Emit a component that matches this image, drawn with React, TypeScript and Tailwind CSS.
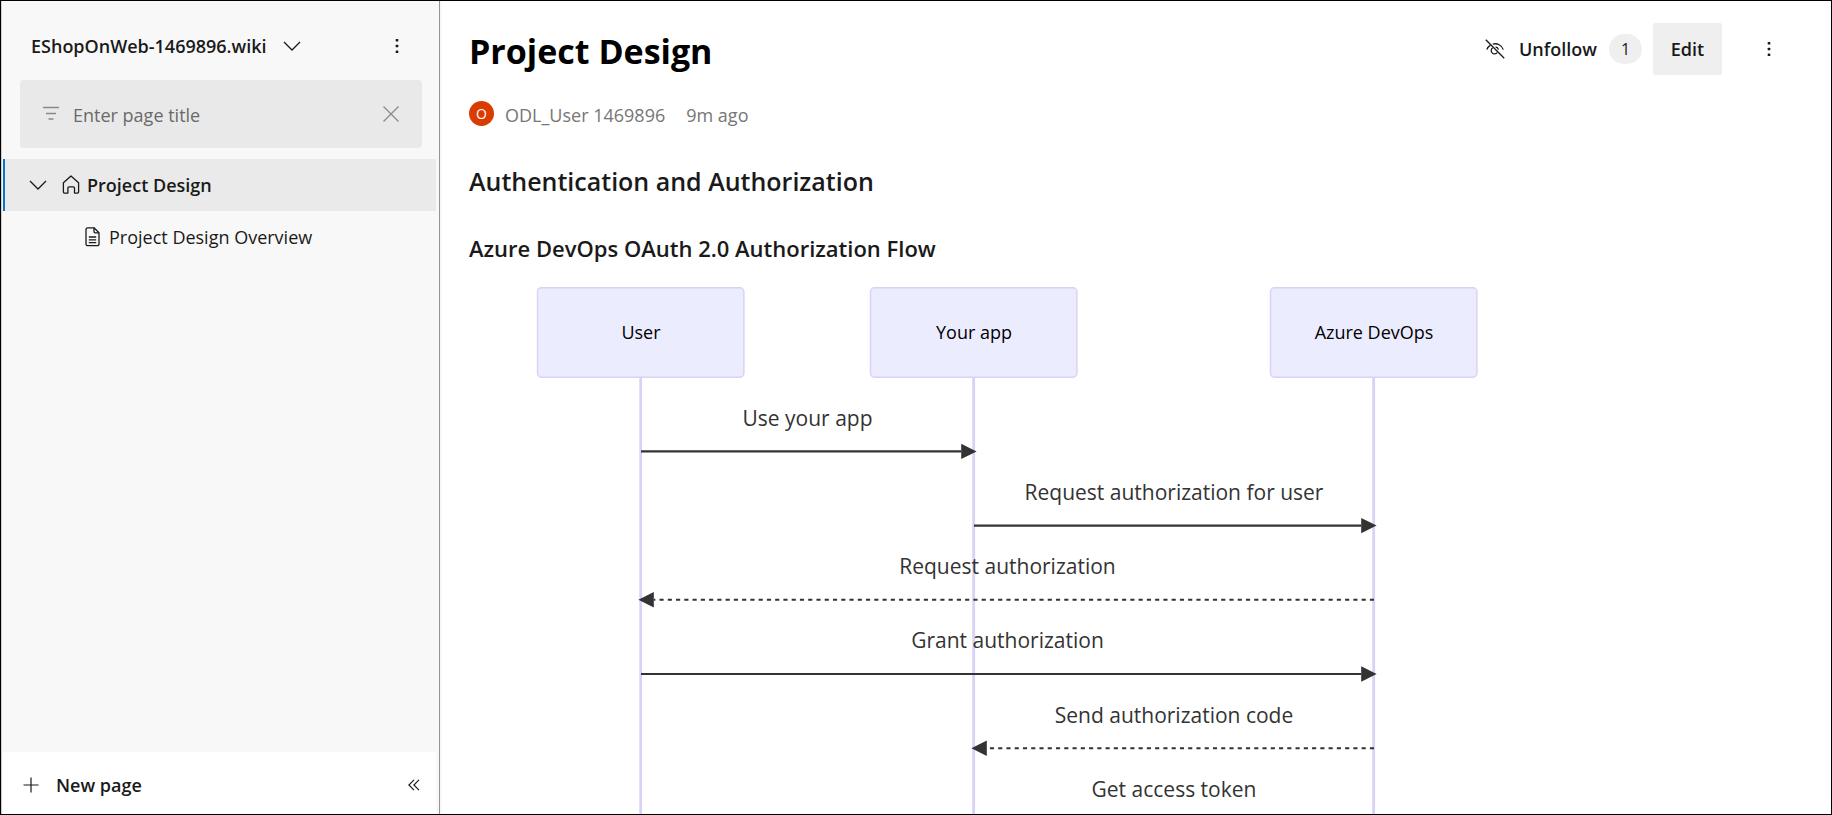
import React from "react";

const actors = [
  { name: "User", x: 172 },
  { name: "Your app", x: 505 },
  { name: "Azure DevOps", x: 905 },
];

const messages = [
  { text: "Use your app", from: 0, to: 1, dashed: false },
  { text: "Request authorization for user", from: 1, to: 2, dashed: false },
  { text: "Request authorization", from: 2, to: 0, dashed: true },
  { text: "Grant authorization", from: 0, to: 2, dashed: false },
  { text: "Send authorization code", from: 2, to: 1, dashed: true },
  { text: "Get access token", from: 1, to: 2, dashed: false },
];

const FIRST_LINE = 171.4;
const LINE_STEP = 74.2;

function ChevronDown() {
  return (
    <svg width="18" height="18" viewBox="0 0 18 18" fill="none" stroke="currentColor" strokeWidth="1.3" aria-hidden="true">
      <path d="M1 5l8 8 8-8" />
    </svg>
  );
}

function MoreDots() {
  return (
    <svg width="18" height="18" viewBox="0 0 18 18" fill="currentColor" aria-hidden="true">
      <rect x="7.7" y="2" width="2.6" height="2.6" rx="0.6" />
      <rect x="7.7" y="7.7" width="2.6" height="2.6" rx="0.6" />
      <rect x="7.7" y="13.4" width="2.6" height="2.6" rx="0.6" />
    </svg>
  );
}

function FilterIcon() {
  return (
    <svg width="18" height="18" viewBox="0 0 18 18" fill="none" stroke="currentColor" strokeWidth="1.5" aria-hidden="true">
      <path d="M1 2.5h16M4 8.5h10M6.5 14h5" />
    </svg>
  );
}

function CloseIcon() {
  return (
    <svg width="18" height="18" viewBox="0 0 18 18" fill="none" stroke="currentColor" strokeWidth="1.3" aria-hidden="true">
      <path d="M1.5 1.5l15 15M16.5 1.5l-15 15" />
    </svg>
  );
}

function HomeIcon() {
  return (
    <svg width="18" height="20" viewBox="0 0 18 20" fill="none" stroke="currentColor" strokeWidth="1.3" strokeLinejoin="round" aria-hidden="true">
      <path d="M9 0.9l7.6 6.9v9.3a1 1 0 0 1-1 1h-3.1v-5a1.2 1.2 0 0 0-1.2-1.2H7.1a1.2 1.2 0 0 0-1.2 1.2v5H2.4a1 1 0 0 1-1-1V7.8z" />
    </svg>
  );
}

function PageIcon() {
  return (
    <svg width="16" height="20" viewBox="0 0 16 20" fill="none" stroke="currentColor" strokeWidth="1.3" strokeLinejoin="round" aria-hidden="true">
      <path d="M9 0.8H2.8A1.8 1.8 0 0 0 1 2.6v14.3a1.8 1.8 0 0 0 1.8 1.8h9.4a1.8 1.8 0 0 0 1.8-1.8V5.8z" />
      <path d="M9 0.8v3.8a1.2 1.2 0 0 0 1.2 1.2H14M3.8 10h7.4M3.8 12.8h7.4M3.8 15.6h7.4" />
    </svg>
  );
}

function UnfollowIcon() {
  return (
    <svg width="20" height="20" viewBox="0 0 20 20" fill="none" stroke="currentColor" strokeWidth="1.3" aria-hidden="true">
      <path d="M0.8 0.8l18.4 18.4" />
      <path d="M1.8 10.6C2.6 8.6 3.9 7.1 5.5 6.1M7.8 5.1c4.5-1.2 9 1 10.5 5.5" />
      <path d="M7.7 8.7a3.4 3.4 0 1 0 4.6 4.9M10.6 7.9a3.4 3.4 0 0 1 2.8 2.8" />
    </svg>
  );
}

function PlusIcon() {
  return (
    <svg width="16" height="16" viewBox="0 0 16 16" fill="none" stroke="currentColor" strokeWidth="1.2" aria-hidden="true">
      <path d="M8 0.5v15M0.5 8h15" />
    </svg>
  );
}

function CollapseIcon() {
  return (
    <svg width="12" height="12" viewBox="0 0 12 12" fill="none" stroke="currentColor" strokeWidth="1.2" aria-hidden="true">
      <path d="M6 0.8L0.9 6 6 11.2M11 0.8L5.9 6l5.1 5.2" />
    </svg>
  );
}

function SequenceDiagram() {
  return (
    <svg width="1100" height="600" viewBox="0 0 1100 600" className="block shrink-0" role="img" aria-label="Authorization sequence diagram">
      {actors.map((a) => (
        <g key={a.name}>
          <line x1={a.x - 0.3} x2={a.x - 0.3} y1="98" y2="600" stroke="#dbd0f5" strokeWidth="2.8" />
          <rect x={a.x - 103.5} y="7.8" width="206.4" height="89.5" rx="4" fill="#ececff" stroke="#dbd0f5" strokeWidth="1.4" />
          <text x={a.x} y="59" textAnchor="middle" fontSize="18" fill="#000">
            {a.name}
          </text>
        </g>
      ))}
      {messages.map((m, i) => {
        const y = FIRST_LINE + i * LINE_STEP;
        const x1 = actors[m.from].x;
        const x2 = actors[m.to].x;
        const dir = x2 > x1 ? 1 : -1;
        const tip = x2 + dir * 2.6;
        const base = tip - dir * 15.4;
        return (
          <g key={m.text}>
            <text x={(x1 + x2) / 2} y={y - 25.6} textAnchor="middle" fontSize="21" fill="#333">
              {m.text}
            </text>
            <line x1={x1} x2={base} y1={y} y2={y} stroke="#333" strokeWidth="2.1" strokeDasharray={m.dashed ? "4.13 4.13" : undefined} />
            <path d={`M${tip} ${y}L${base} ${y - 7.7}V${y + 7.7}z`} fill="#333" />
          </g>
        );
      })}
    </svg>
  );
}

export default function App() {
  return (
    <div className="flex h-screen overflow-hidden border border-black bg-white font-['Open_Sans','Noto_Sans',sans-serif] text-lg leading-7 text-[#1a1a1a]">
      <aside className="flex w-[439px] shrink-0 flex-col border-x border-l-[#d0cece] border-r-[#949494] bg-[#f8f8f8]">
        <div className="flex h-[79px] shrink-0 items-center justify-between pt-2.5 pr-[33px] pl-7">
          <button type="button" className="flex items-center gap-4 pl-px font-semibold">
            EShopOnWeb-1469896.wiki
            <ChevronDown />
          </button>
          <button type="button" aria-label="More wiki options">
            <MoreDots />
          </button>
        </div>

        <div className="mr-[17px] ml-[18px] flex h-[68px] shrink-0 items-center rounded bg-[#e9e9e9] pr-[22px] pl-[22px] text-[#8a8a8a]">
          <FilterIcon />
          <input
            type="text"
            aria-label="Enter page title"
            placeholder="Enter page title"
            className="ml-[13px] min-w-0 flex-1 bg-transparent pt-0.5 outline-none placeholder:text-[#6a6a6a]"
          />
          <button type="button" aria-label="Clear filter">
            <CloseIcon />
          </button>
        </div>

        <nav aria-label="Wiki pages" className="mt-[11px] mr-[3px] ml-px flex-1">
          <div className="flex h-[52px] items-center border-l-2 border-[#0078d4] bg-[#eaeaea] pl-6">
            <button type="button" aria-label="Collapse Project Design">
              <ChevronDown />
            </button>
            <a href="#project-design" className="ml-[15px] flex items-center gap-[7px] font-semibold">
              <HomeIcon />
              Project Design
            </a>
          </div>
          <a href="#overview" className="flex h-[52px] items-center gap-2 pl-[82px]">
            <PageIcon />
            Project Design Overview
          </a>
        </nav>

        <div className="mr-[3px] ml-px flex h-[62px] shrink-0 items-center justify-between bg-white pt-1 pr-4 pl-5">
          <button type="button" className="flex items-center gap-[17px] font-semibold">
            <PlusIcon />
            New page
          </button>
          <button type="button" aria-label="Collapse sidebar">
            <CollapseIcon />
          </button>
        </div>
      </aside>

      <main className="min-w-0 flex-1 overflow-hidden border-l-2 border-[#f8f8f8] pt-[22px] pl-[27px]">
        <header className="flex items-start justify-between pr-9">
          <h1 id="project-design" className="text-[34px] leading-[56px] font-bold text-black">
            Project Design
          </h1>
          <div className="flex h-[52px] items-center">
            <button type="button" className="flex items-center font-semibold">
              <UnfollowIcon />
              <span className="ml-3.5">Unfollow</span>
              <span className="ml-3 flex h-[30px] w-[33px] items-center justify-center rounded-full bg-[#efefef] text-base font-normal">1</span>
            </button>
            <button type="button" className="ml-[11px] h-[52px] w-[69px] rounded-xs bg-[#efefef] font-semibold">
              Edit
            </button>
            <button type="button" aria-label="More page options" className="ml-[21px] flex h-[52px] w-[52px] items-center justify-center">
              <MoreDots />
            </button>
          </div>
        </header>

        <div className="mt-[22px] flex items-start text-[#767676]">
          <span className="flex h-[25px] w-[25px] items-center justify-center rounded-full bg-[#da3b01] text-sm leading-none text-white">O</span>
          <span className="ml-[11px]">ODL_User 1469896</span>
          <span className="ml-[21px]">9m ago</span>
        </div>

        <h2 className="mt-[34px] text-[25px] leading-9 font-semibold">Authentication and Authorization</h2>
        <h3 className="mt-[33px] text-[22px] leading-8 font-semibold">Azure DevOps OAuth 2.0 Authorization Flow</h3>

        <div className="mt-4">
          <SequenceDiagram />
        </div>
      </main>
    </div>
  );
}
